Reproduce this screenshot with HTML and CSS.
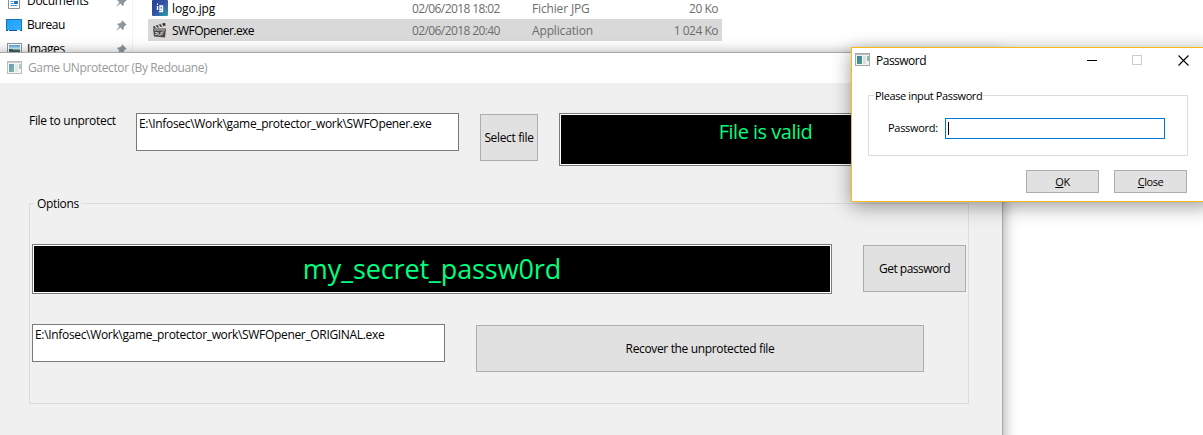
FILE: index.html
```html
<!DOCTYPE html>
<html lang="fr">
<head>
<meta charset="utf-8">
<title>Game UNprotector</title>
<link rel="stylesheet" href="styles.css">
</head>
<body>
<svg class="defs" width="0" height="0">
  <defs>
    <linearGradient id="sky" x1="0" y1="0" x2="1" y2="1"><stop offset="0" stop-color="#1ba0f5"/><stop offset="1" stop-color="#38b0ff"/></linearGradient>
    <linearGradient id="photo" x1="0" y1="0" x2="0" y2="1"><stop offset="0" stop-color="#4b9bd8"/><stop offset=".4" stop-color="#d8edf5"/><stop offset=".6" stop-color="#3d6f70"/><stop offset="1" stop-color="#2c83b8"/></linearGradient>
    <linearGradient id="logo" x1="0" y1="0" x2="1" y2="1"><stop offset="0" stop-color="#27418f"/><stop offset=".5" stop-color="#3552a5"/><stop offset="1" stop-color="#27a3ae"/></linearGradient>
    <linearGradient id="pane" x1="0" y1="0" x2="1" y2="1"><stop offset="0" stop-color="#3d78a8"/><stop offset="1" stop-color="#4fa578"/></linearGradient>
    <symbol id="pin" viewBox="0 0 11 11"><path d="M6.2 .3 10.7 4.8 9.5 5.3 7.9 7 7.7 9.2 6.8 9.900 4.4 7.500.7 10.600.3 10.200 3.4 6.500 1.2 4.200 1.9 3.400 4.1 3.200 5.8 1.500Z" fill="#8c979f"/></symbol>
    <symbol id="app" viewBox="0 0 15 13"><rect x=".5" y=".5" width="14" height="12" fill="#f1f2f3" stroke="#a4a9ad"/><path d="M1 1.500h13" stroke="#b9bec3"/><rect x="2" y="3" width="5" height="8" fill="url(#pane)"/><rect x="8" y="3" width="3" height="8" fill="#dedfe0"/><rect x="12" y="3" width="2" height="5" fill="#8bc0a0"/></symbol>
  </defs>
</svg>
<main class="desktop">
  <section class="explorer">
    <nav class="places">
      <div class="place"><svg class="place-icon" viewBox="0 0 16 16"><path d="M2.500.5h9l2 2v13h-11z" fill="#fff" stroke="#8c9093"/><path d="M4.500 6.500h7M4.500 8.500h3M4.500 10.500h3M4.500 12.500h7" stroke="#459bd3"/><rect x="8" y="8" width="4" height="3" fill="#2878b8"/></svg><span class="place-name documents">Documents</span><svg class="pin"><use href="#pin"/></svg></div>
      <div class="place"><svg class="place-icon" viewBox="0 0 16 16"><rect x=".5" y="2.500" width="15" height="11" fill="url(#sky)" stroke="#1476b9"/><path d="M0 13.500h16" stroke="#075b93"/><path d="M2 13.500h1M11 13.500h3" stroke="#fff"/></svg><span class="place-name bureau">Bureau</span><svg class="pin"><use href="#pin"/></svg></div>
      <div class="place"><svg class="place-icon" viewBox="0 0 16 16"><rect x="1.500" y="2.500" width="14" height="12" fill="#fff" stroke="#92979a"/><rect x="3" y="4" width="11" height="9" fill="url(#photo)"/><path d="M3 8l3 0 3 2 5 0v1H3z" fill="#386958"/></svg><span class="place-name images">Images</span><svg class="pin"><use href="#pin"/></svg></div>
    </nav>
    <div class="files">
      <div class="file"><svg class="file-icon" viewBox="0 0 16 16"><rect width="16" height="16" rx="1" fill="url(#logo)"/><path d="M5.500 6v4M8 6h2.500v3.500H8zM10.500 9v2.500H7M5 4.200h1" fill="none" stroke="#fff" stroke-width="1.400"/></svg><span class="name"><span class="logo-name">logo.jpg</span></span><span class="date">02/06/2018 18:02</span><span class="type">Fichier JPG</span><span class="size">20 Ko</span></div>
      <div class="file selected"><svg class="file-icon" viewBox="0 0 16 16"><path d="M1 4.500 13 .7l.7 2.800L2 6.500z" fill="#333"/><path d="m3 4 2 2M6 3l2 2M9 2l2 2" stroke="#ddd" stroke-width="1.200"/><path d="M1 6.500h13l-1 9-11-1z" fill="#4b4846"/><path d="M2 8h11M3 10.500h2v2H3M6 10v3h3v-3M10 13v-3h2" fill="none" stroke="#c6c2be"/></svg><span class="name"><span class="exe-name">SWFOpener.exe</span></span><span class="date">02/06/2018 20:40</span><span class="type">Application</span><span class="size">1 024 Ko</span></div>
    </div>
  </section>

  <section class="window main-window">
    <header class="main-title"><svg class="app-icon"><use href="#app"/></svg><span>Game UNprotector (By Redouane)</span></header>
    <div class="main-body">
      <div class="file-row">
        <label class="file-label">File to unprotect</label>
        <div class="text-box source-box"><span>E:\Infosec\Work\game_protector_work\SWFOpener.exe</span></div>
        <button class="button select-button"><span>Select file</span></button>
        <div class="display status-display"><span>File is valid</span></div>
      </div>
      <section class="group options">
        <h2 class="legend options-legend"><span>Options</span></h2>
        <div class="option-row">
          <div class="display password-display"><span>my_secret_passw0rd</span></div>
          <button class="button get-button"><span>Get password</span></button>
        </div>
        <div class="option-row recover-row">
          <div class="text-box output-box"><span>E:\Infosec\Work\game_protector_work\SWFOpener_ORIGINAL.exe</span></div>
          <button class="button recover-button"><span>Recover the unprotected file</span></button>
        </div>
      </section>
    </div>
  </section>

  <section class="window dialog">
    <header class="dialog-title">
      <svg class="app-icon"><use href="#app"/></svg><span class="dialog-name">Password</span>
      <svg class="controls" viewBox="0 0 102 11"><path d="M0 5.500h10" stroke="#000"/><rect x="45.500" y=".5" width="9" height="9" fill="none" stroke="#ccc"/><path d="m91.500.5 10 10m0-10-10 10" stroke="#000" stroke-width="1.100"/></svg>
    </header>
    <div class="group prompt">
      <h2 class="legend prompt-legend"><span>Please input Password</span></h2>
      <label class="password-label">Password:</label>
      <div class="password-input"><i class="caret"></i></div>
    </div>
    <footer class="actions"><button class="button action"><span><u>O</u>K</span></button><button class="button action"><span><u>C</u>lose</span></button></footer>
  </section>
</main>
</body>
</html>
```
FILE: styles.css
```css
* { box-sizing: border-box; }
body { margin: 0; overflow: hidden; background: #fff; color: #000; font: 12px/16px "Open Sans", "Noto Sans", sans-serif; }
.defs { position: absolute; }
.desktop { position: relative; width: 1203px; height: 435px; overflow: hidden; }
span, label { white-space: nowrap; }
svg { flex: none; }

.explorer { display: flex; height: 60px; overflow: hidden; }
.places { width: 133px; height: 72px; margin-top: -11px; border-right: 1px solid #f3f3f3; }
.place { display: flex; align-items: center; height: 24px; padding-left: 6px; }
.place-icon { width: 16px; height: 16px; margin-right: 5px; }
.place-name { width: 89px; }
.pin { width: 11px; height: 11px; }
.documents { letter-spacing: -.3px; }
.bureau { letter-spacing: -.5px; }
.images { letter-spacing: -.4px; }
.files { width: 574px; margin: -3px 0 0 15px; }
.file { display: flex; align-items: center; height: 22px; padding: 0 4px; color: #6d6d6d; }
.file.selected { background: #d9d9d9; }
.file-icon { width: 16px; height: 16px; margin-right: 4px; }
.file > span { padding-top: 1px; }
.name { width: 240px; color: #000; }
.logo-name { letter-spacing: -.1px; }
.exe-name { letter-spacing: -.55px; }
.date { width: 120px; letter-spacing: -.6px; }
.type { width: 110px; letter-spacing: -.15px; }
.size { flex: 1; text-align: right; letter-spacing: -.5px; }

.window { position: absolute; }
.main-window { left: -10px; top: 52px; width: 1013px; height: 400px; padding-left: 9px; border: 1px solid #a8a8a8; background: #f0f0f0; box-shadow: 0 2px 14px rgba(0, 0, 0, .4); }
.main-title { display: flex; align-items: center; height: 30px; padding-left: 7px; background: #fff; color: #999; letter-spacing: -.38px; }
.app-icon { width: 15px; height: 13px; margin-right: 6px; }
.main-title .app-icon { margin-bottom: 2px; opacity: .75; }
.main-body { padding: 30px 0 0 29px; }
.file-row { display: flex; align-items: flex-start; height: 90px; }
.file-label { width: 107px; letter-spacing: -.3px; }
.text-box { height: 38px; padding: 2px 0 0 2px; border: 1px solid #7a7a7a; background: #fff; }
.source-box { width: 323px; letter-spacing: -.32px; }
.button { display: flex; align-items: center; justify-content: center; margin: 0; padding: 0; border: 1px solid #adadad; background: #e1e1e1; color: #000; font: inherit; }
.select-button { width: 58px; height: 47px; margin: 1px 21px 0; letter-spacing: -.35px; }
.display { display: flex; justify-content: center; border: 1px solid #7a7a7a; background: #000; box-shadow: inset 0 0 0 1px #fff; color: #00ff7f; }
.status-display { width: 413px; height: 53px; padding-top: 4px; font-size: 20px; line-height: 27px; letter-spacing: -.5px; }
.group { border: 1px solid #dcdcdc; }
.options { width: 940px; height: 201px; padding: 0 2px; }
.legend { display: block; width: max-content; height: 16px; margin: -8px 0 0; font: inherit; line-height: 16px; }
.options-legend { margin-left: 2px; padding: 0 2px 0 3px; background: #f0f0f0; letter-spacing: -.35px; }
.option-row { display: flex; margin-top: 32px; }
.password-display { width: 800px; height: 50px; font-size: 27px; line-height: 47px; letter-spacing: -.1px; }
.get-button { width: 103px; height: 47px; margin: 1px 0 0 31px; letter-spacing: -.5px; }
.recover-row { margin-top: 30px; }
.output-box { width: 413px; letter-spacing: -.33px; }
.recover-button { width: 448px; height: 47px; margin: 1px 0 0 31px; letter-spacing: -.35px; }

.dialog { left: 851px; top: 47px; width: 362px; height: 155px; border: 1px solid #fbb917; background: #fff; box-shadow: 0 4px 18px rgba(0, 0, 0, .4); }
.dialog-title { display: flex; align-items: center; height: 24px; padding-left: 3px; }
.dialog-title .app-icon { margin-bottom: 1px; }
.dialog-name { width: 211px; padding-top: 1px; letter-spacing: -.5px; }
.controls { width: 102px; height: 11px; }
.prompt { display: grid; grid-template-columns: 57px 220px; grid-template-rows: 15px 21px; row-gap: 7px; width: 320px; height: 61px; margin: 23px 0 0 16px; padding-left: 19px; font-size: 11px; }
.prompt-legend { grid-column: 1 / 3; margin-left: -14px; padding: 0 1px; background: #fff; letter-spacing: -.38px; }
.password-label { line-height: 20px; letter-spacing: -.3px; }
.password-input { height: 21px; padding: 3px 0 0 2px; border: 1px solid #0078d7; }
.caret { display: block; width: 1px; height: 13px; background: #000; }
.actions { display: flex; gap: 15px; margin: 14px 0 0 174px; font-size: 11px; }
.action { width: 73px; height: 23px; letter-spacing: -.4px; }
.action u { text-underline-offset: 1px; }
```
